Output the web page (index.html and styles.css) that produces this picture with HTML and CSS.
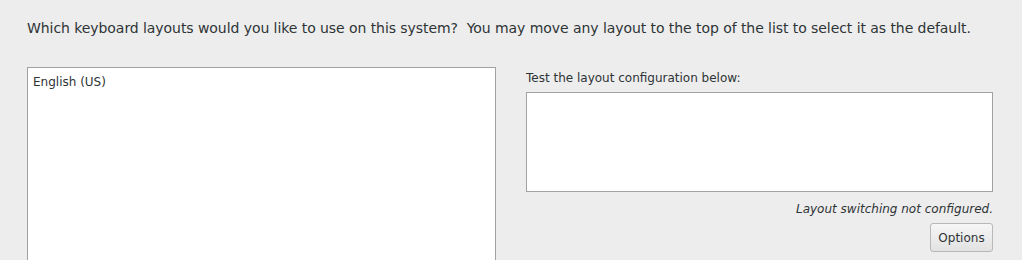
FILE: index.html
```html
<!DOCTYPE html>
<html lang="en">
<head>
    <meta charset="UTF-8">
    <meta name="viewport" content="width=device-width, initial-scale=1.0">
    <title>Keyboard Layouts</title>
    <link rel="stylesheet" href="styles.css">
</head>
<body>

    <!-- Intro -->
    <p class="intro">Which keyboard layouts would you like to use on this system?&nbsp; You may move any layout to the top of the list to select it as the default.</p>

    <div class="columns">
        <!-- Layout list -->
        <div class="layoutlist">
            <div class="layoutitem">English (US)</div>
        </div>

        <!-- Test area -->
        <div class="testpanel">
            <label class="testlabel">Test the layout configuration below:</label>
            <div class="testarea"></div>
            <div class="switchnote">Layout switching not configured.</div>
            <div class="buttonrow">
                <button class="optionsbtn">Options</button>
            </div>
        </div>
    </div>

</body>
</html>
```

FILE: styles.css
```css
body {
    font-family: "DejaVu Sans", sans-serif;
    margin: 0;
    padding: 0;
    height: 260px;
    display: flex;
    flex-direction: column;
    background-color: #ededed;
    color: #2e3436;
    overflow: hidden;
}

/* Intro text */
.intro {
    font-size: 14px;
    letter-spacing: -0.065px;
    margin: 0;
    padding: 19px 0 0 27px;
    line-height: 18px;
    white-space: nowrap;
}

.columns {
    flex: 1;
    min-height: 0;
    display: flex;
    padding: 30px 0 0 27px;
    gap: 30px;
}

/* Layout list */
.layoutlist {
    width: 467px;
    background: white;
    border: 1px solid #a1a1a1;
    border-bottom: none;
}

.layoutitem {
    font-size: 12px;
    line-height: 14px;
    padding: 7px 5px;
}

/* Test panel */
.testpanel {
    width: 467px;
    display: flex;
    flex-direction: column;
    font-size: 12px;
}

.testlabel {
    display: block;
    margin: 4px 0 7px;
    line-height: 14px;
}

.testarea {
    height: 98px;
    background: white;
    border: 1px solid #a1a1a1;
}

.switchnote {
    font-style: italic;
    text-align: right;
    margin-top: 10px;
    line-height: 14px;
}

.buttonrow {
    display: flex;
    justify-content: flex-end;
    margin-top: 7px;
}

.optionsbtn {
    font-family: "DejaVu Sans", sans-serif;
    font-size: 12px;
    color: #2e3436;
    width: 63px;
    height: 29px;
    padding: 0;
    border: 1px solid #b8b8b8;
    border-radius: 3px;
    background: linear-gradient(#f6f6f6, #e2e2e2);
}
```
